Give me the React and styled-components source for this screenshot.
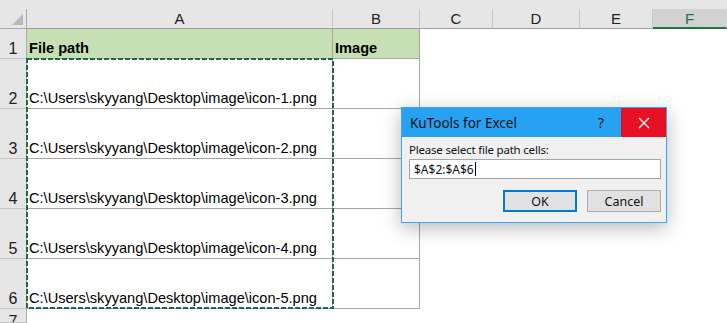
import React from "react";
import styled, { createGlobalStyle } from "styled-components";

const Global = createGlobalStyle`
  html, body { margin: 0; padding: 0; background: #fff; }
  body { width: 727px; height: 323px; overflow: hidden; }
  #root { width: 727px; height: 323px; }
`;

const Page = styled.div`
  position: relative;
  width: 727px;
  height: 323px;
  overflow: hidden;
  background: #fff;
  font-family: "Liberation Sans", Arial, sans-serif;
`;

const TopBand = styled.div`
  height: 9px;
  background: #e6e6e6;
`;

const Sheet = styled.div`
  display: grid;
  grid-template-columns: 27px 306px 87px 73px 87px 73px 1fr;
  grid-template-rows: 20px 30px repeat(5, 50px) 1fr;
  height: 314px;
`;

const Corner = styled.div`
  background: #e6e6e6;
  border-right: 1px solid #ababab;
  border-bottom: 1px solid #ababab;
  position: relative;
  box-sizing: border-box;
`;

const CornerTriangle = styled.div`
  position: absolute;
  right: 3px;
  bottom: 3px;
  width: 0;
  height: 0;
  border-left: 11px solid transparent;
  border-bottom: 11px solid #b8b8b8;
`;

const ColHead = styled.div`
  box-sizing: border-box;
  background: ${(p) => (p.$active ? "#d2d2d2" : "#e6e6e6")};
  border-right: 1px solid ${(p) => (p.$last ? "transparent" : "#c8c8c8")};
  border-bottom: ${(p) => (p.$active ? "2px solid #217346" : "1px solid #9e9e9e")};
  color: ${(p) => (p.$active ? "#217346" : "#222")};
  display: flex;
  align-items: flex-end;
  justify-content: center;
  font-size: 15px;
  line-height: 17px;
  padding-bottom: ${(p) => (p.$active ? "0px" : "1px")};
`;

const RowHead = styled.div`
  box-sizing: border-box;
  background: #e6e6e6;
  border-right: 1px solid #ababab;
  border-bottom: 1px solid #c4c4c4;
  display: flex;
  align-items: flex-start;
  justify-content: center;
  font-size: 16px;
  line-height: 18px;
  color: #222;
  overflow: hidden;
  padding-top: ${(p) => p.$top}px;
`;

const Cell = styled.div`
  box-sizing: border-box;
  background: ${(p) => (p.$header ? "#c6e0b4" : "#fff")};
  border-right: 1px solid ${(p) => (p.$bordered ? "#a6a6a6" : "transparent")};
  border-bottom: 1px solid ${(p) => (p.$bordered ? "#a6a6a6" : "transparent")};
  display: flex;
  align-items: flex-end;
  padding: 0 0 1px 2px;
  font-size: 14.6px;
  line-height: 17px;
  font-weight: ${(p) => (p.$header ? 700 : 400)};
  color: #000;
  white-space: nowrap;
`;

const Marquee = styled.svg`
  position: absolute;
  left: 26px;
  top: 58px;
  width: 308px;
  height: 251px;
  pointer-events: none;
`;

const Dialog = styled.div`
  position: absolute;
  left: 401px;
  top: 107px;
  width: 266px;
  height: 116px;
  box-sizing: border-box;
  border: 1px solid #3aa6ee;
  background: #f0f0f0;
  box-shadow: 0 5px 18px rgba(0, 0, 0, 0.28);
  display: flex;
  flex-direction: column;
  font-family: "Noto Sans", "Open Sans", sans-serif;
`;

const TitleBar = styled.div`
  height: 29px;
  background: #27a1f1;
  display: flex;
  align-items: center;
`;

const Title = styled.div`
  flex: 1;
  padding-left: 8px;
  font-size: 13.5px;
  color: #111;
`;

const HelpButton = styled.div`
  width: 30px;
  text-align: center;
  font-size: 13.5px;
  color: #111;
  margin-right: 5px;
`;

const CloseButton = styled.div`
  width: 45px;
  height: 29px;
  background: #e81123;
  display: flex;
  align-items: center;
  justify-content: center;
`;

const Body = styled.div`
  padding: 5px 6px 0 7px;
  display: flex;
  flex-direction: column;
`;

const Label = styled.div`
  font-size: 11.5px;
  line-height: 16px;
  color: #111;
  letter-spacing: -0.2px;
`;

const Input = styled.div`
  margin-top: 1px;
  height: 20px;
  box-sizing: border-box;
  border: 1px solid #a6a6a6;
  background: #fff;
  display: flex;
  align-items: center;
  padding-left: 4px;
  font-size: 12px;
  color: #111;
  width: 252px;
`;

const Caret = styled.span`
  display: inline-block;
  width: 1px;
  height: 14px;
  background: #000;
  margin-left: 1px;
`;

const Buttons = styled.div`
  margin-top: 11px;
  display: flex;
  justify-content: flex-end;
  gap: 10px;
  width: 252px;
`;

const Button = styled.div`
  width: 74px;
  height: 22px;
  box-sizing: border-box;
  background: #e1e1e1;
  border: ${(p) => (p.$primary ? "2px solid #0078d7" : "1px solid #adadad")};
  display: flex;
  align-items: center;
  justify-content: center;
  font-size: 12.5px;
  color: #111;
`;

const cols = ["A", "B", "C", "D", "E", "F"];
const emptyCols = ["C", "D", "E", "F"];
const paths = [1, 2, 3, 4, 5].map(
  (n) => `C:\\Users\\skyyang\\Desktop\\image\\icon-${n}.png`
);

export default function App() {
  return (
    <>
      <Global />
      <Page>
        <TopBand />
        <Sheet>
          <Corner>
            <CornerTriangle />
          </Corner>
          {cols.map((c, i) => (
            <ColHead key={c} $active={c === "F"} $last={i === cols.length - 1}>
              {c}
            </ColHead>
          ))}

          <RowHead $top={11}>1</RowHead>
          <Cell $header $bordered>File path</Cell>
          <Cell $header $bordered>Image</Cell>
          {emptyCols.map((c) => (
            <Cell key={c} />
          ))}

          {paths.map((p, i) => (
            <React.Fragment key={p}>
              <RowHead $top={31}>{i + 2}</RowHead>
              <Cell $bordered>{p}</Cell>
              <Cell $bordered />
              {emptyCols.map((c) => (
                <Cell key={c} />
              ))}
            </React.Fragment>
          ))}

          <RowHead $top={4}>7</RowHead>
          <Cell />
          <Cell />
          {emptyCols.map((c) => (
            <Cell key={c} />
          ))}
        </Sheet>

        <Marquee viewBox="0 0 308 251">
          <rect
            x="1"
            y="1"
            width="306"
            height="249"
            fill="none"
            stroke="#1e6b42"
            strokeWidth="2"
            strokeDasharray="5 2"
          />
        </Marquee>

        <Dialog>
          <TitleBar>
            <Title>KuTools for Excel</Title>
            <HelpButton>?</HelpButton>
            <CloseButton>
              <svg width="12" height="12" viewBox="0 0 12 12">
                <path d="M1 1 L11 11 M11 1 L1 11" stroke="#fff" strokeWidth="1.3" />
              </svg>
            </CloseButton>
          </TitleBar>
          <Body>
            <Label>Please select file path cells:</Label>
            <Input>
              $A$2:$A$6
              <Caret />
            </Input>
            <Buttons>
              <Button $primary>OK</Button>
              <Button>Cancel</Button>
            </Buttons>
          </Body>
        </Dialog>
      </Page>
    </>
  );
}
